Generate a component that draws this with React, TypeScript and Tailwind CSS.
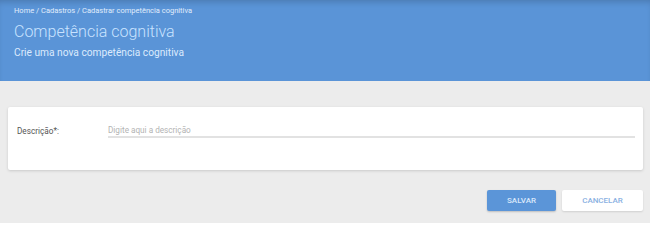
import React from 'react'

export default function App() {
  return (
    <div className="min-h-[223px] w-[650px] bg-[#ececec] font-['Roboto',sans-serif]">
      {/* Page header */}
      <div className="h-[81px] bg-[#5a94d7] px-[14px] pt-[6px] shadow-[inset_0_5px_6px_-3px_rgba(0,0,0,0.18)]">
        <div className="text-[7.5px] leading-[10px] text-[#e0edfc]">
          Home / Cadastros / Cadastrar competência cognitiva
        </div>
        <h1 className="mt-[6px] text-[16px] font-light leading-[20px] text-[#c9e3ff]">
          Competência cognitiva
        </h1>
        <p className="mt-[4px] text-[10.2px] leading-[14px] text-[#dcebfd]">
          Crie uma nova competência cognitiva
        </p>
      </div>

      <div className="px-[8px] pr-[7px] pt-[26px]">
        {/* Form card */}
        <div className="flex h-[63px] items-start rounded-[2px] bg-white pl-[9px] pr-[8px] pt-[17px] shadow-[0_1px_3px_rgba(0,0,0,0.15)]">
          <label className="w-[91px] pt-[1px] text-[8.2px] leading-[12px] text-[#555]">Descrição*:</label>
          <input
            placeholder="Digite aqui a descrição"
            className="h-[14px] flex-1 border-b-2 border-[#e2e2e2] bg-transparent text-[8.2px] leading-[12px] text-[#555] outline-none placeholder:text-[#b3b3b3]"
          />
        </div>

        {/* Actions */}
        <div className="mt-[20px] flex justify-end gap-[6px]">
          <button className="h-[21px] w-[69px] rounded-[2px] bg-[#5b95d8] text-[8px] font-medium text-[#dce9fb] shadow-[0_1px_2px_rgba(0,0,0,0.2)]">
            SALVAR
          </button>
          <button className="h-[21px] w-[81px] rounded-[2px] bg-white text-[8px] font-medium text-[#8ab1e2] shadow-[0_1px_2px_rgba(0,0,0,0.12)]">
            CANCELAR
          </button>
        </div>
      </div>
    </div>
  )
}
